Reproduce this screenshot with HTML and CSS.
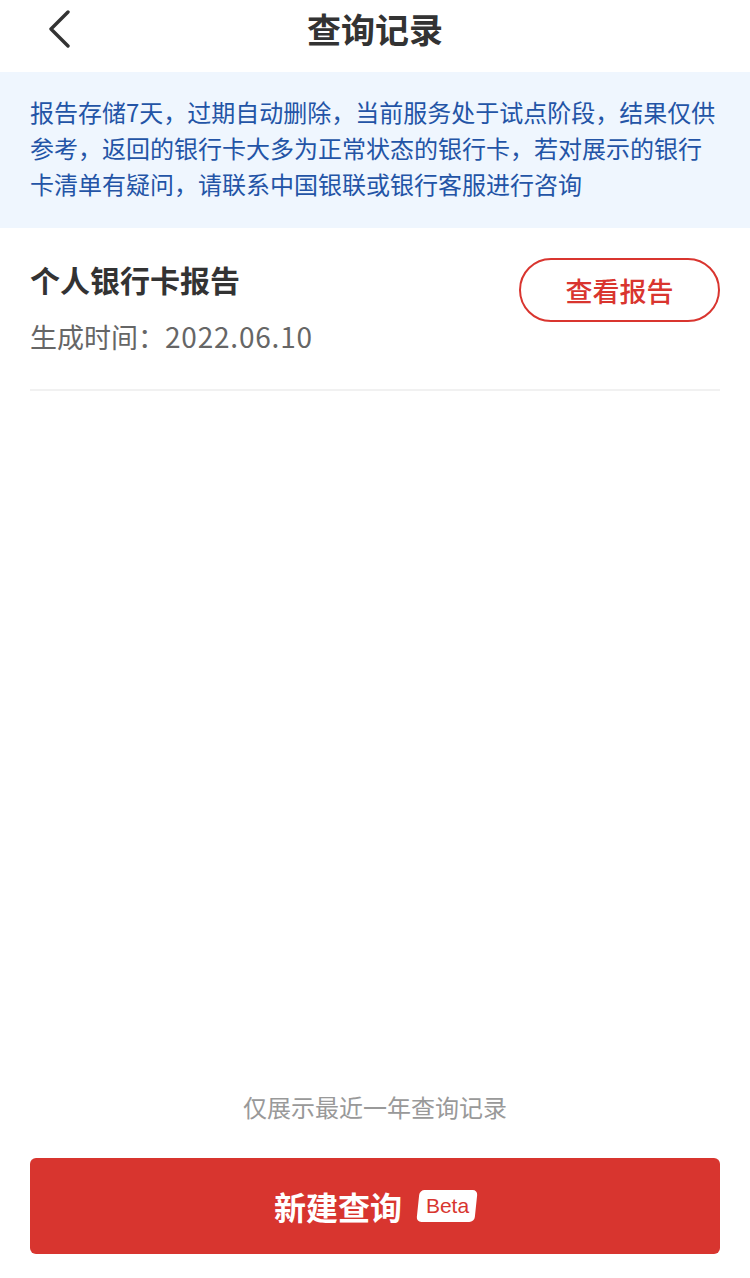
FILE: index.html
```html
<!DOCTYPE html>
<html lang="zh">
<head>
  <meta charset="UTF-8" />
  <meta name="viewport" content="width=device-width, initial-scale=1" />
  <title>查询记录</title>
  <link rel="stylesheet" href="styles.css">
</head>
<body>
  <div class="page">
    <div class="navbar">
      <span class="back">
        <svg width="26" height="38" viewBox="0 0 26 38"><path d="M22 2 L5 19 L22 36" fill="none" stroke="#333" stroke-width="3.4" stroke-linecap="round" stroke-linejoin="round"/></svg>
      </span>
      <h1 class="title">查询记录</h1>
    </div>

    <div class="notice">
      报告存储7天，过期自动删除，当前服务处于试点阶段，结果仅供参考，返回的银行卡大多为正常状态的银行卡，若对展示的银行卡清单有疑问，请联系中国银联或银行客服进行咨询
    </div>

    <div class="record">
      <div class="record-info">
        <div class="record-name">个人银行卡报告</div>
        <div class="record-time">生成时间：<span class="date">2022.06.10</span></div>
      </div>
      <button class="view-btn">查看报告</button>
    </div>

    <div class="spacer"></div>

    <div class="footer-tip">仅展示最近一年查询记录</div>
    <button class="new-btn">新建查询<span class="beta">Beta</span></button>
  </div>
</body>
</html>
```

FILE: styles.css
```css
body {
  margin: 0;
  font-family: "Noto Sans CJK SC", "Noto Sans", sans-serif;
  background: #fff;
  color: #333;
}

.page {
  width: 750px;
  height: 1278px;
  display: flex;
  flex-direction: column;
}

.navbar {
  height: 72px;
  display: flex;
  align-items: center;
  justify-content: center;
  position: relative;
}

.back {
  position: absolute;
  left: 46px;
  top: 10px;
}

.title {
  margin: 0;
  margin-top: -16px;
  font-size: 34px;
  font-weight: 700;
  color: #333;
}

.notice {
  background: #eff6fe;
  color: #2354a6;
  font-size: 24px;
  line-height: 36px;
  padding: 22px 30px 22px 30px;
  height: 112px;
}

.record {
  margin: 0 30px;
  display: flex;
  justify-content: space-between;
  align-items: flex-start;
  padding: 30px 0 34px;
  border-bottom: 2px solid #f1f1f1;
}

.record-name {
  font-size: 30px;
  font-weight: 700;
  color: #333;
  line-height: 42px;
}

.record-time {
  margin-top: 18px;
  font-size: 27px;
  color: #666;
  line-height: 36px;
}

.date {
  letter-spacing: 0.8px;
  font-size: 28px;
}

.view-btn {
  width: 201px;
  height: 64px;
  border: 2px solid #d9352f;
  border-radius: 32px;
  background: #fff;
  color: #d9352f;
  font-family: inherit;
  font-size: 27px;
  font-weight: 500;
  cursor: pointer;
}

.spacer {
  flex: 1;
}

.footer-tip {
  text-align: center;
  font-size: 24px;
  color: #999;
  line-height: 34px;
}

.new-btn {
  margin: 34px 30px 24px;
  height: 96px;
  border: none;
  border-radius: 6px;
  background: #d8352f;
  color: #fff;
  font-family: inherit;
  font-size: 32px;
  font-weight: 700;
  display: flex;
  align-items: center;
  justify-content: center;
  cursor: pointer;
  isolation: isolate;
}

.beta {
  position: relative;
  margin-left: 16px;
  color: #d8352f;
  font-family: "Liberation Sans", sans-serif;
  font-size: 21px;
  font-weight: 400;
  line-height: 32px;
  padding: 0 7px 0 8px;
}

.beta::before {
  content: "";
  position: absolute;
  inset: 0;
  background: #fff;
  border-radius: 5px;
  transform: skewX(-6deg);
  z-index: -1;
}
```
